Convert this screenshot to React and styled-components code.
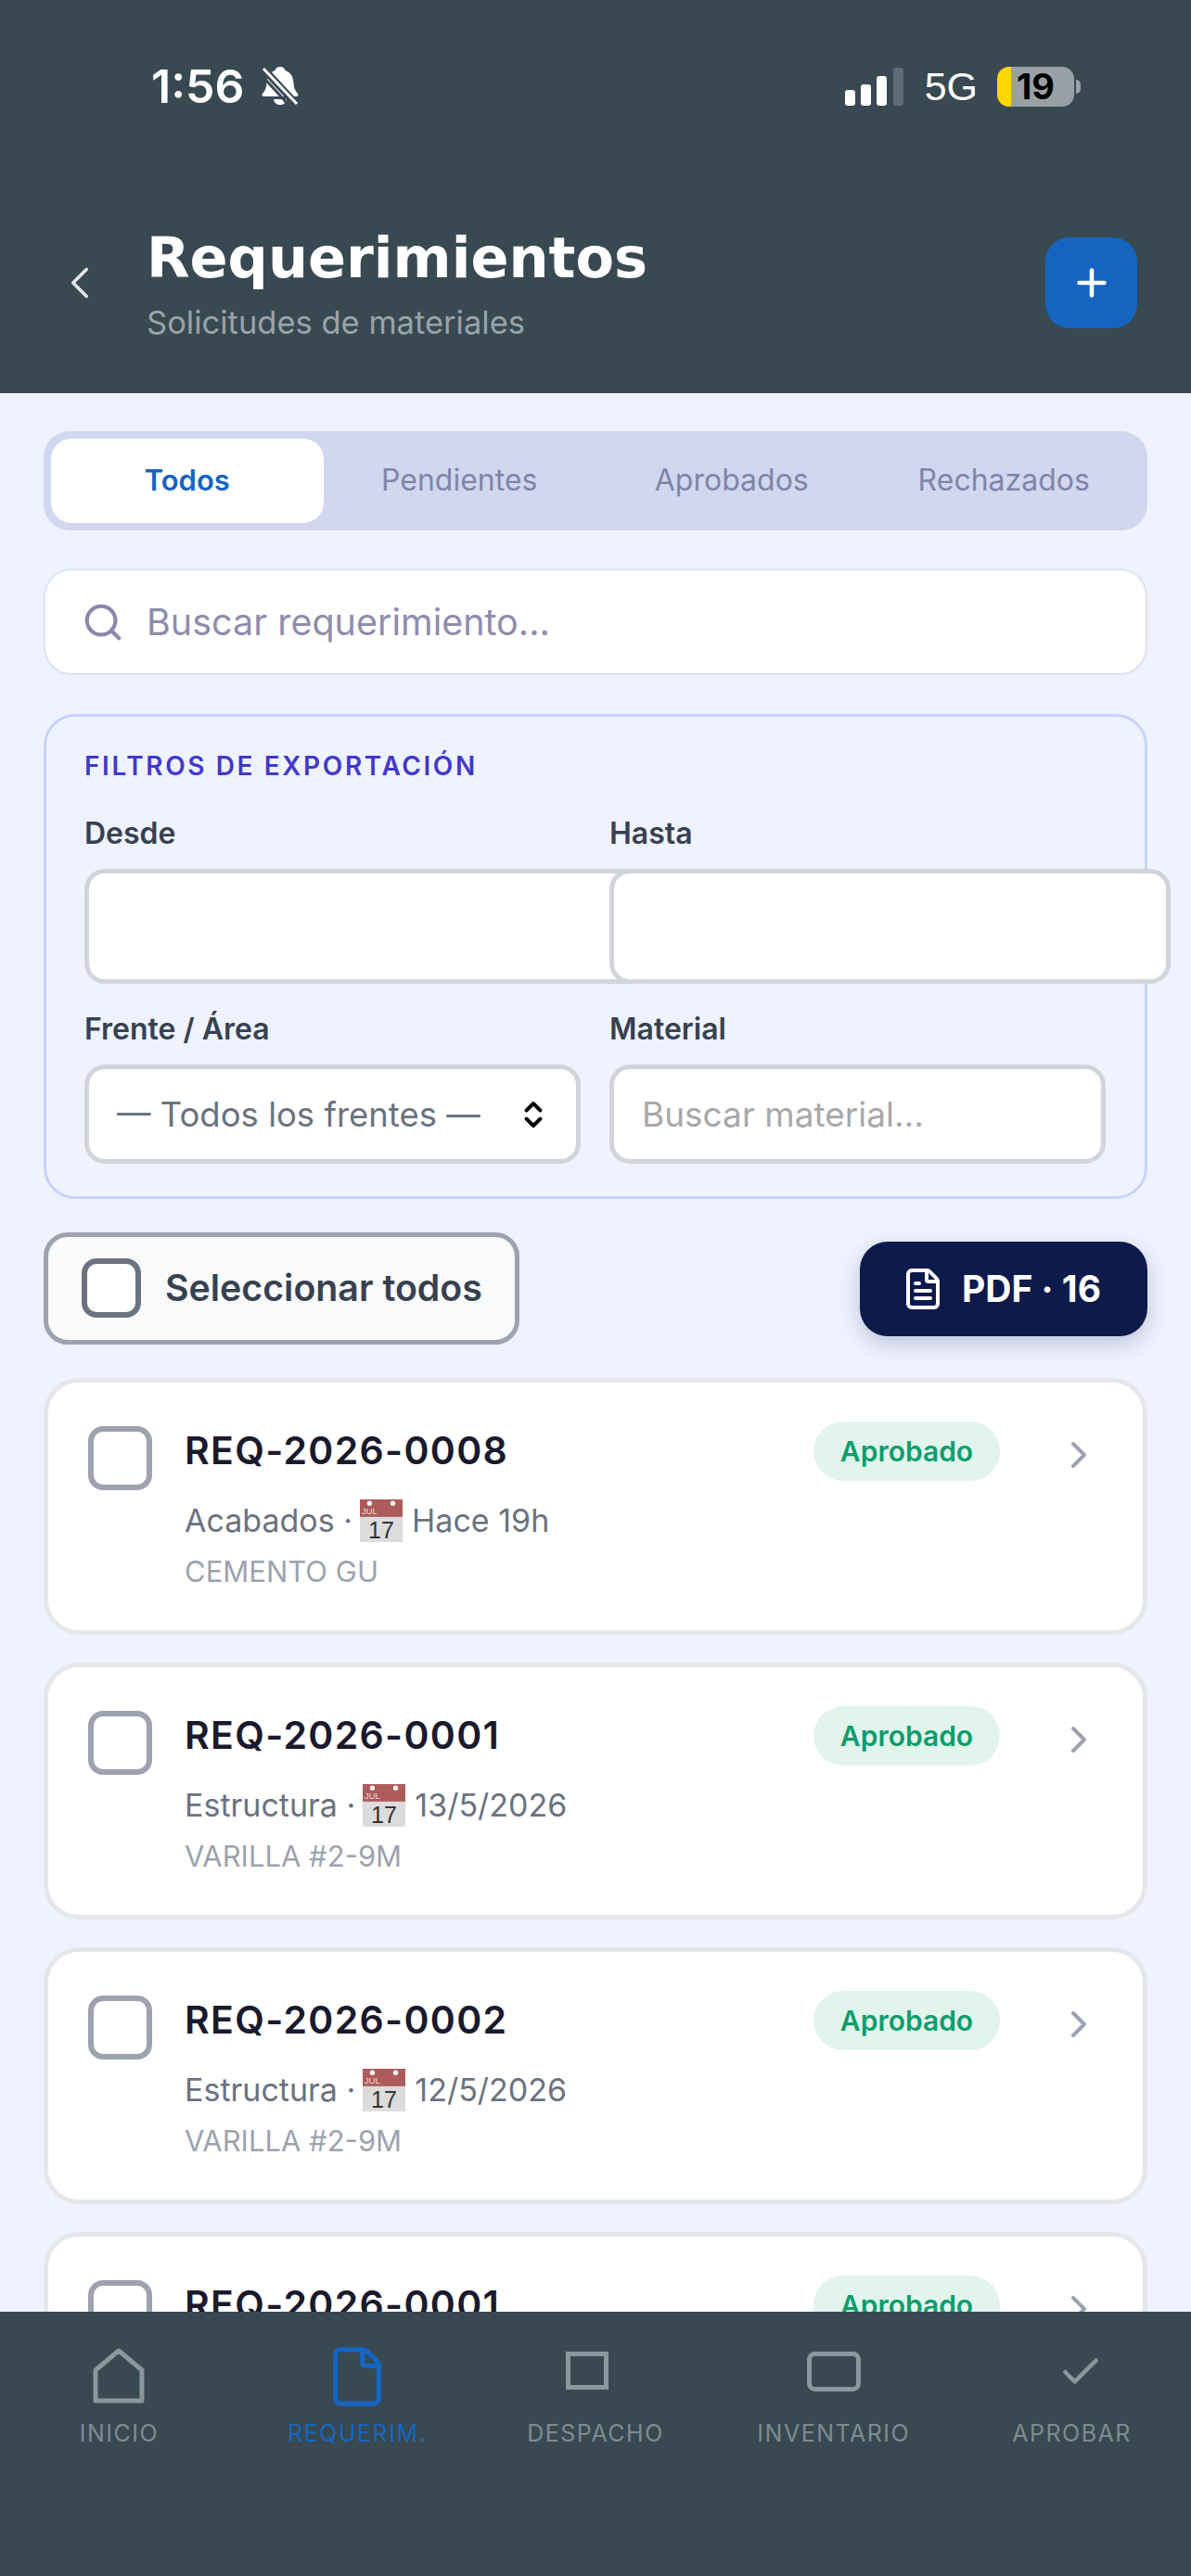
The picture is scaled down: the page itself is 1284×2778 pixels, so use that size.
import styled, { createGlobalStyle } from 'styled-components';
import { ChevronLeft, ChevronRight, ChevronsUpDown, Check, File, FileText, Plus, Search } from 'lucide-react';

const FONT = 'Inter, "Liberation Sans", sans-serif';

const GlobalStyle = createGlobalStyle`
  html, body {
    margin: 0;
    padding: 0;
    background: #eff3ff;
  }
  * {
    box-sizing: border-box;
  }
`;

const Page = styled.div`
  width: 1284px;
  height: 2778px;
  display: flex;
  flex-direction: column;
  overflow: hidden;
  font-family: ${FONT};
  background: #eff3ff;
`;

const Header = styled.header`
  height: 424px;
  flex-shrink: 0;
  background: #384952;
  color: #fff;
`;

const StatusBar = styled.div`
  height: 186px;
  padding: 0 126px 0 163px;
  display: flex;
  align-items: center;
  justify-content: space-between;
`;

const StatusGroup = styled.div`
  display: flex;
  align-items: center;
`;

const Time = styled.span`
  font-family: ${FONT};
  font-size: 50px;
  font-weight: 600;
  width: 120px;
`;

const Network = styled.span`
  font-family: "Liberation Sans", sans-serif;
  font-size: 43px;
  margin: 0 21px;
`;

const Battery = styled.div`
  position: relative;
  width: 83px;
  height: 43px;
  border-radius: 13px;
  background: linear-gradient(to right, #ffd600 15px, #98a0a5 15px);
  color: #000;
  font-family: ${FONT};
  font-size: 38px;
  font-weight: 700;
  display: flex;
  align-items: center;
  justify-content: center;

  &::after {
    content: '';
    position: absolute;
    right: -7px;
    top: 14px;
    width: 5px;
    height: 15px;
    border-radius: 0 5px 5px 0;
    background: #98a0a5;
  }
`;

const TitleRow = styled.div`
  height: 238px;
  padding: 70px 58px 70px 57px;
  display: flex;
  align-items: center;
`;

const BackIcon = styled(ChevronLeft)`
  color: #e3e6e8;
  margin-right: 43px;
  flex-shrink: 0;
`;

const TitleBlock = styled.div`
  flex: 1;
  margin-top: 4px;
`;

const Title = styled.h1`
  margin: 0;
  font-family: "DejaVu Sans", sans-serif;
  font-size: 60.500px;
  font-weight: 700;
  line-height: 64px;
  letter-spacing: 0;
`;

const Subtitle = styled.div`
  margin-top: 17px;
  font-size: 34.500px;
  line-height: 42px;
  color: #9aa3a8;
`;

const AddButton = styled.button`
  width: 99px;
  height: 98px;
  border: none;
  border-radius: 26px;
  background: #1565c0;
  color: #fff;
  display: flex;
  align-items: center;
  justify-content: center;
  padding: 0;
`;

const Main = styled.main`
  flex: 1;
  min-height: 0;
  overflow: hidden;
  padding: 41px 47px 0;
  display: flex;
  flex-direction: column;
`;

const Tabs = styled.div`
  height: 107px;
  flex-shrink: 0;
  padding: 8px;
  border-radius: 28px;
  background: #d0d7ef;
  display: grid;
  grid-template-columns: repeat(4, 1fr);
`;

const Tab = styled.div`
  display: flex;
  align-items: center;
  justify-content: center;
  border-radius: 22px;
  padding-bottom: 2px;
  font-size: ${(p) => (p.$active ? 31 : 32)}px;
  font-weight: ${(p) => (p.$active ? 600 : 400)};
  color: ${(p) => (p.$active ? '#1565c0' : '#8085a8')};
  background: ${(p) => (p.$active ? '#fff' : 'transparent')};
`;

const SearchBox = styled.div`
  height: 115px;
  flex-shrink: 0;
  margin-top: 41px;
  padding: 0 42px 0 39px;
  border: 2px solid #dde3f5;
  border-radius: 30px;
  background: #fff;
  display: flex;
  align-items: center;
  gap: 24px;
  color: #8b88ac;
`;

const SearchInput = styled.input`
  flex: 1;
  min-width: 0;
  border: none;
  outline: none;
  padding: 0;
  background: transparent;
  font-family: ${FONT};
  font-size: 39.500px;

  &::placeholder {
    color: #8f8cad;
    opacity: 1;
  }
`;

const FilterPanel = styled.section`
  height: 523px;
  flex-shrink: 0;
  margin-top: 42px;
  padding: 37px 41px 0;
  border: 3px solid #c7d2fe;
  border-radius: 34px;
`;

const FilterTitle = styled.div`
  font-size: 28px;
  line-height: 32px;
  font-weight: 600;
  letter-spacing: 2.600px;
  color: #4338ca;
`;

const FilterGrid = styled.div`
  margin-top: 38px;
  display: grid;
  grid-template-columns: 535px 535px;
  column-gap: 31px;
  row-gap: 30px;
`;

const Field = styled.div`
  min-width: 0;
`;

const FieldLabel = styled.div`
  font-size: 32px;
  line-height: 38px;
  font-weight: 600;
  color: #374151;
  margin-bottom: 19px;
`;

const boxStyles = `
  display: flex;
  align-items: center;
  background: #fff;
  border: 5px solid #d1d5db;
  border-radius: 22px;
  font-family: ${FONT};
  font-size: 37px;
  outline: none;
`;

const DateBox = styled.input`
  ${boxStyles}
  position: relative;
  width: 605px;
  height: 124px;
  padding: 0 30px;
`;

const SelectBox = styled.div`
  ${boxStyles}
  height: 107px;
  padding: 0 28px 0 30px;
  font-size: 36.500px;
  color: #6b7280;
  justify-content: space-between;
  white-space: nowrap;
`;

const SelectArrows = styled(ChevronsUpDown)`
  color: #000;
  flex-shrink: 0;
`;

const MaterialInput = styled.input`
  ${boxStyles}
  width: 100%;
  height: 107px;
  padding: 0 30px;

  &::placeholder {
    color: #a8a8a8;
    opacity: 1;
  }
`;

const ActionsRow = styled.div`
  height: 121px;
  flex-shrink: 0;
  margin-top: 36px;
  display: flex;
  align-items: center;
  justify-content: space-between;
`;

const SelectAll = styled.div`
  width: 513px;
  height: 121px;
  padding: 0 0 2px 36px;
  border: 5px solid #9ca3af;
  border-radius: 26px;
  background: #f9fafb;
  display: flex;
  align-items: center;
  gap: 26px;
  font-size: 39.300px;
  font-weight: 600;
  color: #374151;
`;

const Checkbox = styled.div`
  flex-shrink: 0;
  background: #fff;
  border-style: solid;
  width: ${(p) => (p.$large ? 69 : 64)}px;
  height: ${(p) => (p.$large ? 69 : 64)}px;
  border-width: 6px;
  border-color: ${(p) => (p.$large ? '#9ca3af' : '#6b7280')};
  border-radius: 16px;
  margin-top: ${(p) => (p.$large ? 6 : 0)}px;
`;

const PdfButton = styled.button`
  width: 310px;
  height: 102px;
  border: none;
  border-radius: 30px;
  background: #0d1b4c;
  color: #fff;
  display: flex;
  align-items: center;
  justify-content: center;
  gap: 18px;
  font-family: ${FONT};
  font-size: 39px;
  font-weight: 700;
  box-shadow: 0 8px 24px rgba(13, 27, 76, 0.22);
  padding: 0 6px 0 0;
`;

const CardList = styled.div`
  margin-top: 36px;
  display: flex;
  flex-direction: column;
  gap: 30px;
`;

const Card = styled.article`
  flex-shrink: 0;
  height: 277px;
  padding: 41px 45px 0 43px;
  border: 5px solid #e5e7eb;
  border-radius: 38px;
  background: #fff;
  display: flex;
  align-items: flex-start;
  gap: 35px;
`;

const CardBody = styled.div`
  flex: 1;
  min-width: 0;
`;

const CardId = styled.div`
  font-size: 41px;
  line-height: 64px;
  font-weight: 600;
  letter-spacing: 1.300px;
  color: #1a1a2e;
`;

const CardMeta = styled.div`
  margin-top: 21px;
  display: flex;
  align-items: center;
  font-size: 34px;
  line-height: 46px;
  color: #6b7280;
  white-space: pre;
`;

const CardMaterial = styled.div`
  margin-top: 12px;
  font-size: 31px;
  line-height: 40px;
  color: #9ca3af;
`;

const Badge = styled.div`
  width: 201px;
  height: 64px;
  flex-shrink: 0;
  margin-top: 1px;
  border-radius: 32px;
  background: #e1f5ec;
  color: #0f9d6b;
  display: flex;
  align-items: center;
  justify-content: center;
  font-size: 30px;
  font-weight: 600;
`;

const CardChevron = styled(ChevronRight)`
  flex-shrink: 0;
  color: #9ca3af;
  margin: 13px 0 0 26px;
`;

const BottomNav = styled.nav`
  height: 285px;
  flex-shrink: 0;
  background: #384952;
  display: grid;
  grid-template-columns: repeat(5, 1fr);
  padding-top: 38px;
`;

const NavItem = styled.div`
  display: flex;
  flex-direction: column;
  align-items: center;
  color: ${(p) => (p.$active ? '#1565c0' : '#8b979c')};
`;

const NavIconSlot = styled.div`
  height: 62px;
  display: flex;
  align-items: flex-start;
  justify-content: center;
  margin-left: ${(p) => p.$shift || 0}px;
`;

const NavLabel = styled.div`
  margin-top: 15px;
  font-size: 25px;
  line-height: 32px;
  letter-spacing: 1.5px;
  color: ${(p) => (p.$active ? '#1565c0' : '#7f8b90')};
`;

const CalendarEmoji = () => (
  <svg width="46" height="46" viewBox="0 0 44 44" style={{ margin: '0 10px 0 8px' }}>
    <rect width="44" height="44" fill="#dcdcdc" />
    <rect width="44" height="18" fill="#ad5b5b" />
    <circle cx="10" cy="4" r="2.5" fill="#fff" />
    <circle cx="34" cy="4" r="2.5" fill="#fff" />
    <text x="2" y="15" fontSize="9" fill="#f3d9d9" fontFamily="Liberation Sans">JUL</text>
    <text x="22" y="40" fontSize="24" fill="#333" textAnchor="middle" fontFamily="Liberation Sans">17</text>
  </svg>
);

const BellSlash = () => (
  <svg width="42" height="44" viewBox="0 0 42 44" style={{ marginLeft: -2 }}>
    <path
      d="M21 1c3 0 5 2 5.600 4 6 2 8.400 7 8.800 13 .4 6 2 9 4.600 12 1 1.500.4 3-1.500 3H3.500c-1.900 0-2.500-1.500-1.500-3 2.600-3 4.200-6 4.600-12 .4-6 2.800-11 8.800-13C16 3 18 1 21 1z"
      fill="#fff"
    />
    <path d="M14 36h14c-.5 4-3.500 6-7 6s-6.500-2-7-6z" fill="#fff" />
    <path d="M1 1l38 41" stroke="#384952" strokeWidth="8" />
    <path d="M3 3l36 38" stroke="#fff" strokeWidth="3" />
    <path d="M0 9l30 33" stroke="#384952" strokeWidth="3" />
  </svg>
);

const SignalBars = () => (
  <svg width="65" height="41" viewBox="0 0 65 41" fill="#fff">
    <rect x="0" y="24" width="11" height="17" rx="3" />
    <rect x="17" y="18" width="11" height="23" rx="3" />
    <rect x="34" y="9" width="11" height="32" rx="3" />
    <rect x="52" y="0" width="11" height="41" rx="3" fill="#5f6e76" />
  </svg>
);

const HomeIcon = () => (
  <svg width="56" height="62" viewBox="0 0 56 62" fill="none" stroke="currentColor" strokeWidth="5" strokeLinejoin="round">
    <path d="M28 4 L53 25 V58 H3 V25 Z" />
  </svg>
);

const RectIcon = ({ width, height, radius }) => (
  <svg width={width} height={height} viewBox={`0 0 ${width} ${height}`} fill="none" stroke="currentColor" strokeWidth="5" style={{ marginTop: 5 }}>
    <rect x="2.500" y="2.500" width={width - 5} height={height - 5} rx={radius} />
  </svg>
);

const requests = [
  { id: 'REQ-2026-0008', area: 'Acabados', when: 'Hace 19h', material: 'CEMENTO GU' },
  { id: 'REQ-2026-0001', area: 'Estructura', when: '13/5/2026', material: 'VARILLA #2-9M' },
  { id: 'REQ-2026-0002', area: 'Estructura', when: '12/5/2026', material: 'VARILLA #2-9M' },
  { id: 'REQ-2026-0001', area: 'Estructura', when: '12/5/2026', material: 'VARILLA #2-9M' },
];

const navItems = [
  { label: 'INICIO', icon: <HomeIcon /> },
  { label: 'REQUERIM.', icon: <File size={70} strokeWidth={1.8} style={{ marginTop: -3 }} />, active: true },
  { label: 'DESPACHO', icon: <RectIcon width={46} height={41} radius={0} />, shift: -18 },
  { label: 'INVENTARIO', icon: <RectIcon width={58} height={43} radius={6} /> },
  { label: 'APROBAR', icon: <Check size={50} strokeWidth={2.2} style={{ marginTop: 2 }} />, shift: 18 },
];

export default function App() {
  return (
    <>
      <GlobalStyle />
      <Page>
        <Header>
          <StatusBar>
            <StatusGroup>
              <Time>1:56</Time>
              <BellSlash />
            </StatusGroup>
            <StatusGroup>
              <SignalBars />
              <Network>5G</Network>
              <Battery>19</Battery>
            </StatusGroup>
          </StatusBar>
          <TitleRow>
            <BackIcon size={58} strokeWidth={1.5} />
            <TitleBlock>
              <Title>Requerimientos</Title>
              <Subtitle>Solicitudes de materiales</Subtitle>
            </TitleBlock>
            <AddButton>
              <Plus size={46} strokeWidth={2.4} />
            </AddButton>
          </TitleRow>
        </Header>

        <Main>
          <Tabs>
            <Tab $active>Todos</Tab>
            <Tab>Pendientes</Tab>
            <Tab>Aprobados</Tab>
            <Tab>Rechazados</Tab>
          </Tabs>

          <SearchBox>
            <Search size={46} strokeWidth={2.2} />
            <SearchInput placeholder="Buscar requerimiento..." />
          </SearchBox>

          <FilterPanel>
            <FilterTitle>FILTROS DE EXPORTACIÓN</FilterTitle>
            <FilterGrid>
              <Field>
                <FieldLabel>Desde</FieldLabel>
                <DateBox />
              </Field>
              <Field>
                <FieldLabel>Hasta</FieldLabel>
                <DateBox />
              </Field>
              <Field>
                <FieldLabel>Frente / Área</FieldLabel>
                <SelectBox>
                  — Todos los frentes —
                  <SelectArrows size={36} strokeWidth={2.6} />
                </SelectBox>
              </Field>
              <Field>
                <FieldLabel>Material</FieldLabel>
                <MaterialInput placeholder="Buscar material..." />
              </Field>
            </FilterGrid>
          </FilterPanel>

          <ActionsRow>
            <SelectAll>
              <Checkbox />
              Seleccionar todos
            </SelectAll>
            <PdfButton>
              <FileText size={48} strokeWidth={2} />
              PDF · 16
            </PdfButton>
          </ActionsRow>

          <CardList>
            {requests.map((req, i) => (
              <Card key={i}>
                <Checkbox $large />
                <CardBody>
                  <CardId>{req.id}</CardId>
                  <CardMeta>
                    {req.area} ·<CalendarEmoji />{req.when}
                  </CardMeta>
                  <CardMaterial>{req.material}</CardMaterial>
                </CardBody>
                <Badge>Aprobado</Badge>
                <CardChevron size={48} strokeWidth={2} />
              </Card>
            ))}
          </CardList>
        </Main>

        <BottomNav>
          {navItems.map((item) => (
            <NavItem key={item.label} $active={item.active}>
              <NavIconSlot $shift={item.shift}>{item.icon}</NavIconSlot>
              <NavLabel $active={item.active}>{item.label}</NavLabel>
            </NavItem>
          ))}
        </BottomNav>
      </Page>
    </>
  );
}
